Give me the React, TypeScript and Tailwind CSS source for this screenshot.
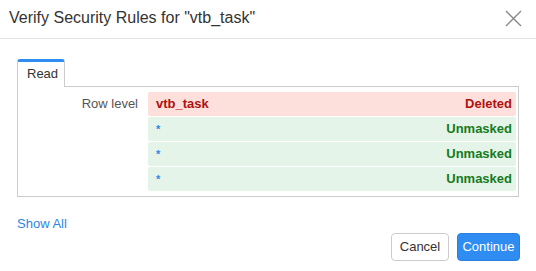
import React from 'react';

const rows = [
  { name: 'vtb_task', status: 'Deleted', deleted: true },
  { name: '*', status: 'Unmasked', deleted: false },
  { name: '*', status: 'Unmasked', deleted: false },
  { name: '*', status: 'Unmasked', deleted: false },
];

export default function App() {
  return (
    <div className="w-[536px] h-[271px] bg-white text-[#333] font-['Liberation_Sans',Arial,sans-serif] overflow-hidden">
      {/* header */}
      <div className="h-[39px] border-b border-[#e5e5e5] flex items-center justify-between pl-[9px] pr-[14px]">
        <h1 className="text-[16px] leading-none pb-[3px]">Verify Security Rules for "vtb_task"</h1>
        <svg width="17" height="17" viewBox="0 0 17 17" className="mb-[2px]">
          <path d="M1 1 L16 16 M16 1 L1 16" stroke="#8a8a8a" strokeWidth="1.4" fill="none" />
        </svg>
      </div>

      <div className="px-[17px] pt-[19px]">
        {/* tabs */}
        <div className="flex">
          <div className="w-[48px] h-[28px] border border-[#ccc] border-t-[3px] border-t-[#2f8cf0] border-b-0 rounded-t-[3px] bg-white relative top-px text-[13px] flex items-center pl-[9px] pb-px">
            Read
          </div>
        </div>

        {/* panel */}
        <div className="border border-[#ccc] flex pt-[5px] pb-[5px] pr-[2px]">
          <div className="w-[130px] shrink-0 text-right pr-[10px] text-[13px] text-[#555] leading-[24px]">
            Row level
          </div>
          <div className="flex-1 flex flex-col gap-px">
            {rows.map((r, i) => (
              <div
                key={i}
                className={
                  r.deleted
                    ? 'h-[24px] flex items-center justify-between pl-[8px] pr-[4px] bg-[#fde0dc] rounded-[2px] text-[13px] font-bold text-[#b0100f]'
                    : 'h-[24px] flex items-center justify-between pl-[8px] pr-[4px] bg-[#e5f4e8] rounded-[2px] text-[13px] font-bold text-[#157a20]'
                }
              >
                <span className={r.deleted ? '' : 'text-[#2b86e6] text-[11px]'}>{r.name}</span>
                <span>{r.status}</span>
              </div>
            ))}
          </div>
        </div>

        {/* footer */}
        <div className="flex justify-between items-start">
          <a className="text-[13px] text-[#2b86e6] mt-[20px] leading-none">Show All</a>
          <div className="flex gap-[8px] mt-[36px] -mr-px">
            <button className="w-[58px] h-[28px] border border-[#ccc] rounded-[4px] bg-white text-[13px] text-[#333]">
              Cancel
            </button>
            <button className="w-[63px] h-[28px] border border-[#2a7fe0] rounded-[4px] bg-[#2f8df2] text-[13px] text-white">
              Continue
            </button>
          </div>
        </div>
      </div>
    </div>
  );
}
